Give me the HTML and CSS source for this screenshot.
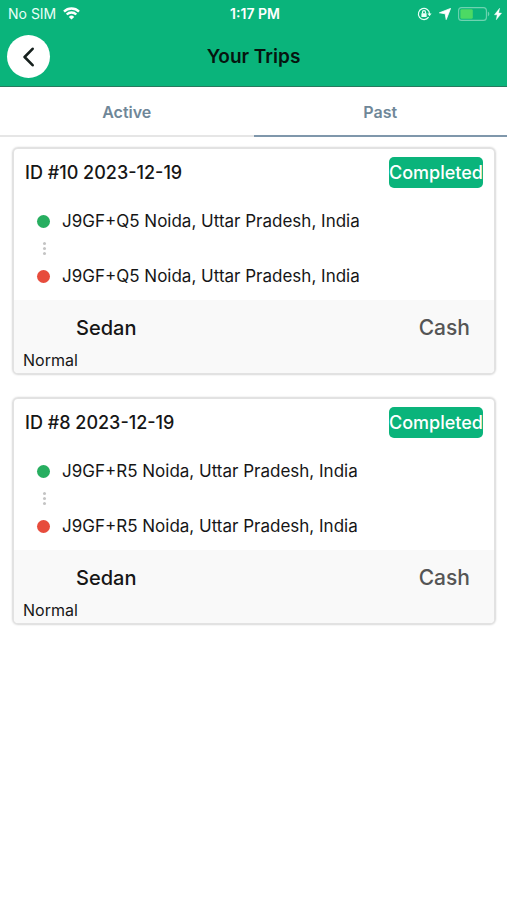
FILE: index.html
```html
<!DOCTYPE html>
<html lang="en">
<head>
<meta charset="utf-8">
<meta name="viewport" content="width=device-width, initial-scale=1">
<title>Your Trips</title>
<link rel="stylesheet" href="styles.css">
</head>
<body>
<header class="top">
  <div class="status">
    <div class="status-left">
      <span>No SIM</span>
      <svg width="17" height="13" viewBox="0 0 17 13" aria-hidden="true" fill="none" stroke="#fff" stroke-width="2.4">
        <path d="M1 4.6a10.7 10.7 0 0 1 15 0M3.7 7.5a6.8 6.8 0 0 1 9.6 0"/>
        <path d="M8.5 12.4 5.8 9.9a3.8 3.8 0 0 1 5.4 0z" fill="#fff" stroke="none"/>
      </svg>
    </div>
    <time class="clock">1:17 PM</time>
    <div class="status-right">
      <svg width="15" height="14" viewBox="0 0 15 14" aria-hidden="true" fill="none" stroke="#e9fff7" stroke-width="1.2">
        <path d="M11.6 10.2A5.6 5.6 0 1 1 12.6 7"/>
        <path d="M10.4 6.4h4.2l-2.1 2.8z" fill="#e9fff7" stroke="none"/>
        <rect x="4.4" y="6.2" width="5.2" height="3.9" rx=".5" fill="#e9fff7" stroke="none"/>
        <path d="M5.5 6.5V5.2a1.5 1.5 0 0 1 3 0v1.3"/>
      </svg>
      <svg class="arrow" width="12" height="12" viewBox="0 0 12 12" aria-hidden="true">
        <path d="M11.6.4 7.2 11.6 6.2 5.8.4 4.8z" fill="#fff" stroke="#fff" stroke-width=".8" stroke-linejoin="round"/>
      </svg>
      <svg width="32" height="14" viewBox="0 0 32 14" aria-hidden="true">
        <rect x=".6" y=".6" width="27.8" height="12.8" rx="3" fill="none" stroke="#6fd3b1" stroke-width="1.1"/>
        <rect x="2.4" y="2.2" width="12.4" height="9.6" rx="1.4" fill="#4cd964"/>
        <path d="M29.8 4.6c2 .8 2 4 0 4.8z" fill="#6fd3b1"/>
      </svg>
      <svg width="8" height="12" viewBox="0 0 8 12" aria-hidden="true">
        <path d="M5.6.2.4 6.8h2.8L2.3 11.8 7.6 5.1H4.7z" fill="#fff" stroke="#fff" stroke-width=".4"/>
      </svg>
    </div>
  </div>
  <div class="bar">
    <button class="back" type="button" aria-label="Back">
      <svg width="12" height="20" viewBox="0 0 12 20" aria-hidden="true" fill="none" stroke="#16201d" stroke-width="2.6" stroke-linecap="round" stroke-linejoin="round">
        <path d="M9.6 1.8 1.6 10l8 8.2"/>
      </svg>
    </button>
    <h1>Your Trips</h1>
  </div>
</header>
<nav class="tabs">
  <a href="#active">Active</a>
  <a href="#past" class="current" aria-current="page">Past</a>
</nav>
<main class="trips" id="past">
  <article class="card">
    <div class="head">
      <h2>ID #10 2023-12-19</h2>
      <span class="badge">Completed</span>
    </div>
    <div class="route">
      <p class="stop from">J9GF+Q5 Noida, Uttar Pradesh, India</p>
      <div class="dots"><i></i><i></i><i></i></div>
      <p class="stop to">J9GF+Q5 Noida, Uttar Pradesh, India</p>
    </div>
    <div class="foot">
      <div class="ride"><span>Sedan</span><span class="pay">Cash</span></div>
      <p class="kind">Normal</p>
    </div>
  </article>
  <article class="card">
    <div class="head">
      <h2>ID #8 2023-12-19</h2>
      <span class="badge">Completed</span>
    </div>
    <div class="route">
      <p class="stop from">J9GF+R5 Noida, Uttar Pradesh, India</p>
      <div class="dots"><i></i><i></i><i></i></div>
      <p class="stop to">J9GF+R5 Noida, Uttar Pradesh, India</p>
    </div>
    <div class="foot">
      <div class="ride"><span>Sedan</span><span class="pay">Cash</span></div>
      <p class="kind">Normal</p>
    </div>
  </article>
</main>
</body>
</html>
```
FILE: styles.css
```css
* { box-sizing: border-box; }
body {
  margin: 0;
  background: #fff;
  color: #161616;
  font-family: Inter, "Liberation Sans", sans-serif;
  font-size: 16px;
}
h1, h2, p { margin: 0; }

.top {
  background: #0ab47b;
  border-bottom: 1px solid #277a5e;
}
.status {
  display: grid;
  grid-template-columns: 1fr auto 1fr;
  align-items: center;
  height: 27px;
  padding: 0 5px 0 8px;
  color: #fff;
  font-size: 14px;
}
.status-left, .status-right { display: flex; align-items: center; }
.status-left { gap: 7px; color: #e9fff7; }
.status-right { justify-content: flex-end; gap: 4px; }
.arrow { margin: 0 3px; }
.clock { font-weight: 600; }

.bar {
  display: grid;
  grid-template-columns: 1fr auto 1fr;
  align-items: center;
  height: 59px;
  padding: 0 7px;
}
.bar h1 {
  color: #06150f;
  font-size: 19px;
  font-weight: 600;
}
.back {
  display: flex;
  align-items: center;
  justify-content: center;
  width: 43px;
  height: 43px;
  padding: 0;
  border: 0;
  border-radius: 50%;
  background: #fff;
}

.tabs {
  display: grid;
  grid-template-columns: 1fr 1fr;
}
.tabs a {
  display: flex;
  align-items: center;
  justify-content: center;
  height: 50px;
  padding-top: 2px;
  border-bottom: 2px solid #e6e6e6;
  color: #6f8798;
  font-size: 16px;
  font-weight: 600;
  text-decoration: none;
}
.tabs .current { border-color: #7f97ab; }

.trips {
  display: grid;
  gap: 22px;
  padding: 10px 11px 24px 12px;
}
.card {
  overflow: hidden;
  border: 2px solid #e2e2e2;
  border-radius: 6px;
  box-shadow: 0 0 2px #dcdcdc;
}
.head {
  display: flex;
  align-items: center;
  justify-content: space-between;
  padding: 8px 11px 0;
}
.head h2 {
  font-size: 18px;
  font-weight: 500;
}
.badge {
  height: 31px;
  border-radius: 5px;
  background: #0ab47b;
  color: #fff;
  font-size: 18px;
  font-weight: 500;
  line-height: 31px;
}
.route { padding: 21px 23px 12px; }
.stop {
  display: flex;
  align-items: center;
  gap: 12px;
  font-size: 17px;
  line-height: 24px;
}
.stop::before {
  content: "";
  width: 13px;
  height: 13px;
  border-radius: 50%;
  background: #27ae60;
}
.to::before { background: #e74c3c; }
.dots {
  display: flex;
  flex-direction: column;
  align-items: center;
  justify-content: center;
  gap: 2px;
  width: 14px;
  height: 31px;
}
.dots i {
  width: 3px;
  height: 3px;
  border-radius: 50%;
  background: #c4c4c4;
}
.foot {
  padding: 13px 9px 2px;
  background: #f9f9f9;
}
.ride {
  display: flex;
  justify-content: space-between;
  padding: 0 15px 0 53px;
  font-size: 20px;
  font-weight: 500;
  line-height: 30px;
}
.pay {
  color: #555;
  font-size: 21px;
}
.kind {
  padding-top: 6px;
  font-size: 16px;
  line-height: 22px;
}
```
